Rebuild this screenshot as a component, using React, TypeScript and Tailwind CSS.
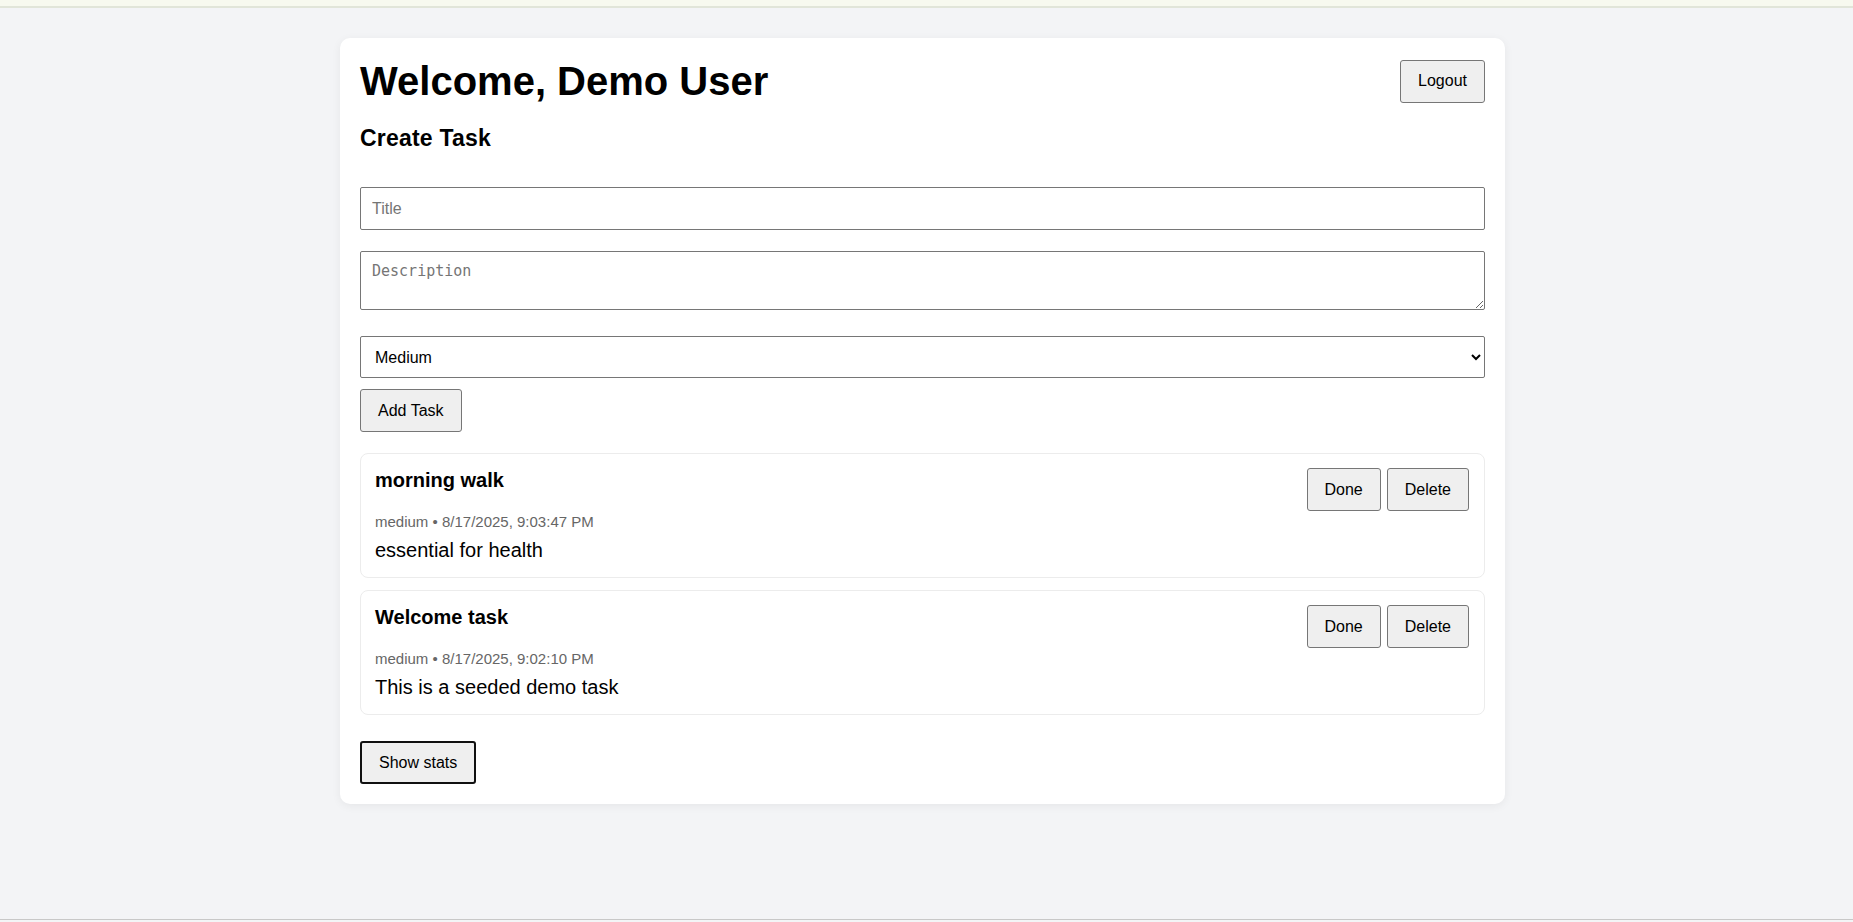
import { useState } from "react";

type Task = {
  id: number;
  title: string;
  priority: string;
  created: string;
  description: string;
};

const tasks: Task[] = [
  {
    id: 1,
    title: "morning walk",
    priority: "medium",
    created: "8/17/2025, 9:03:47 PM",
    description: "essential for health",
  },
  {
    id: 2,
    title: "Welcome task",
    priority: "medium",
    created: "8/17/2025, 9:02:10 PM",
    description: "This is a seeded demo task",
  },
];

const btn =
  "h-[43px] bg-[#efefef] border border-[#767676] rounded-[3px] text-[16px] leading-[18px] text-black";

function TaskCard({ task }: { task: Task }) {
  return (
    <div className="border border-[#ececec] rounded-[8px] pt-[14px] pl-[14px] pr-[15px] pb-[15px]">
      <div className="flex items-start justify-between">
        <h3 className="text-[20px] leading-[23px] font-bold pt-[1px]">{task.title}</h3>
        <div className="flex gap-[6px]">
          <button className={`${btn} px-[17px]`}>Done</button>
          <button className={`${btn} px-[17px]`}>Delete</button>
        </div>
      </div>
      <p className="mt-[2px] text-[15px] leading-[17px] text-[#666666]">
        {task.priority} • {task.created}
      </p>
      <p className="mt-[9px] text-[20px] leading-[23px]">{task.description}</p>
    </div>
  );
}

export default function App() {
  const [priority, setPriority] = useState("medium");

  return (
    <div className="min-h-[922px] flex flex-col bg-[#f3f4f6] text-black font-['Liberation_Sans',Arial,sans-serif]">
      <div className="h-[8px] bg-[#f7f9ef] border-b-2 border-[#e1e5d9]" />

      <div className="mt-[30px] ml-[340px] w-[1165px] bg-white rounded-[10px] p-5 shadow-[0_2px_10px_rgba(0,0,0,0.06)]">
        <div className="flex items-center justify-between">
          <h1 className="text-[40px] leading-[46px] font-bold">Welcome, Demo User</h1>
          <button className={`${btn} px-[17px]`}>Logout</button>
        </div>

        <h2 className="mt-[22px] text-[23px] leading-[25px] font-bold tracking-[0.2px]">Create Task</h2>

        <form className="mt-[36px]" onSubmit={(e) => e.preventDefault()}>
          <input
            type="text"
            placeholder="Title"
            className="block w-full h-[43px] px-[11px] bg-white border border-[#767676] rounded-[2px] text-[16px] placeholder:text-[#757575]"
          />
          <textarea
            placeholder="Description"
            rows={2}
            className="block mt-[21px] w-full h-[59px] px-[11px] py-[11px] bg-white border border-[#767676] rounded-[2px] text-[15px] leading-[17px] font-['DejaVu_Sans_Mono',monospace] placeholder:text-[#757575]"
          />
          <select
            value={priority}
            onChange={(e) => setPriority(e.target.value)}
            className="block mt-[26px] w-full h-[42px] px-[10px] bg-white border border-[#767676] rounded-[2px] text-[16px]"
          >
            <option value="low">Low</option>
            <option value="medium">Medium</option>
            <option value="high">High</option>
          </select>
          <button type="submit" className={`${btn} mt-[11px] px-[17px]`}>
            Add Task
          </button>
        </form>

        <div className="mt-[21px] flex flex-col gap-[12px]">
          {tasks.map((t) => (
            <TaskCard key={t.id} task={t} />
          ))}
        </div>

        <button className="mt-[26px] h-[43px] px-[17px] bg-[#efefef] border-2 border-[#101010] rounded-[3px] text-[16px] leading-[18px]">
          Show stats
        </button>
      </div>

      <div className="flex-1" />
      <div className="h-[3px] border-t border-[#c8c8c8] bg-[#f3f4f6]" />
    </div>
  );
}
